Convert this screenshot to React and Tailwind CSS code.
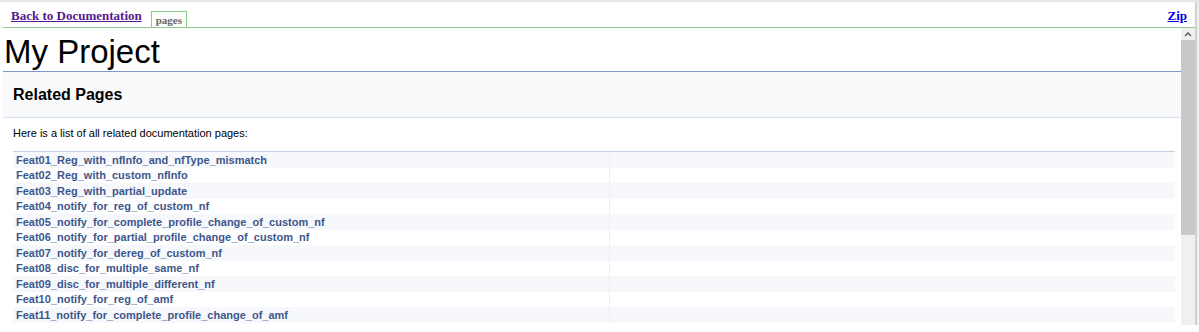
import React from 'react';

const pages = [
  'Feat01_Reg_with_nfInfo_and_nfType_mismatch',
  'Feat02_Reg_with_custom_nfInfo',
  'Feat03_Reg_with_partial_update',
  'Feat04_notify_for_reg_of_custom_nf',
  'Feat05_notify_for_complete_profile_change_of_custom_nf',
  'Feat06_notify_for_partial_profile_change_of_custom_nf',
  'Feat07_notify_for_dereg_of_custom_nf',
  'Feat08_disc_for_multiple_same_nf',
  'Feat09_disc_for_multiple_different_nf',
  'Feat10_notify_for_reg_of_amf',
  'Feat11_notify_for_complete_profile_change_of_amf',
];

const App = () => {
  return (
    <div className="w-full h-[332px] bg-white overflow-hidden flex flex-col font-['Liberation_Sans',Arial,sans-serif]">
      <div className="h-[2px] bg-[#e8e8e8] shrink-0" />
      <div className="flex flex-1 min-h-0">
        <div className="flex-1 flex flex-col min-w-0">
          {/* top bar */}
          <div className="ml-[3px] h-[26px] shrink-0 flex items-start pl-[8px] pr-[8px] border-b border-[#88cc88]">
            <a href="#" className="mt-[6px] text-[13px] leading-[15px] font-bold text-[#551a8b] underline font-['Liberation_Serif',serif]">
              Back to Documentation
            </a>
            <div className="ml-[9px] mt-[9px] h-[16px] border-t border-l border-r border-[#88cc88] px-[4px] pt-[1px] text-[11px] leading-[14px] font-bold text-[#666666] font-['Liberation_Serif',serif]">
              pages
            </div>
            <a href="#" className="ml-auto mt-[6px] text-[13px] leading-[15px] font-bold text-[#0000ee] underline font-['Liberation_Serif',serif]">
              Zip
            </a>
          </div>

          {/* framed docs */}
          <div className="ml-[3px] h-[297px] shrink-0 flex">
            <div className="flex-1 min-w-0 overflow-hidden">
              <div className="h-[44px] pt-[4px] border-b border-[#7f96c6]">
                <div className="text-[33px] leading-[39px] text-black pl-[1px]">My Project</div>
              </div>
              <div className="h-[46px] flex items-center pl-[10px] bg-[#f9fafc] border-b border-[#d8dfee]">
                <h1 className="text-[16px] font-bold text-black">Related Pages</h1>
              </div>
              <p className="mt-[9px] ml-[10px] text-[11px] leading-[13px] text-black">
                Here is a list of all related documentation pages:
              </p>
              <div className="mt-[11px] ml-[10px] mr-[6px] border-t border-[#c4cfe5]">
                {pages.map((p, i) => (
                  <div key={p} className={`flex h-[15.5px] ${i % 2 === 0 ? 'bg-[#f7f8fb]' : 'bg-white'}`}>
                    <div className="w-[597px] shrink-0 pl-[3px] pt-[1px] flex items-center border-r border-[#eceff5]">
                      <a href="#" className="text-[11px] leading-[13px] font-bold text-[#3d578c]">{p}</a>
                    </div>
                    <div className="flex-1" />
                  </div>
                ))}
              </div>
            </div>
            {/* scrollbar */}
            <div className="w-[14px] shrink-0 bg-[#f0f0f0] flex flex-col">
              <div className="h-[12px] flex items-center justify-center">
                <svg width="8" height="5" viewBox="0 0 8 5">
                  <path d="M1 4 L4 1 L7 4" fill="none" stroke="#505050" strokeWidth="1.3" />
                </svg>
              </div>
              <div className="h-[195px] bg-[#c8c8c8]" />
            </div>
          </div>
        </div>
        <div className="w-[4px] shrink-0 flex">
          <div className="w-[2px] h-[323px] bg-[#d0d0d0]" />
          <div className="w-[2px] h-[323px] bg-[#f0f0f0]" />
        </div>
      </div>
    </div>
  );
};

export default App;
